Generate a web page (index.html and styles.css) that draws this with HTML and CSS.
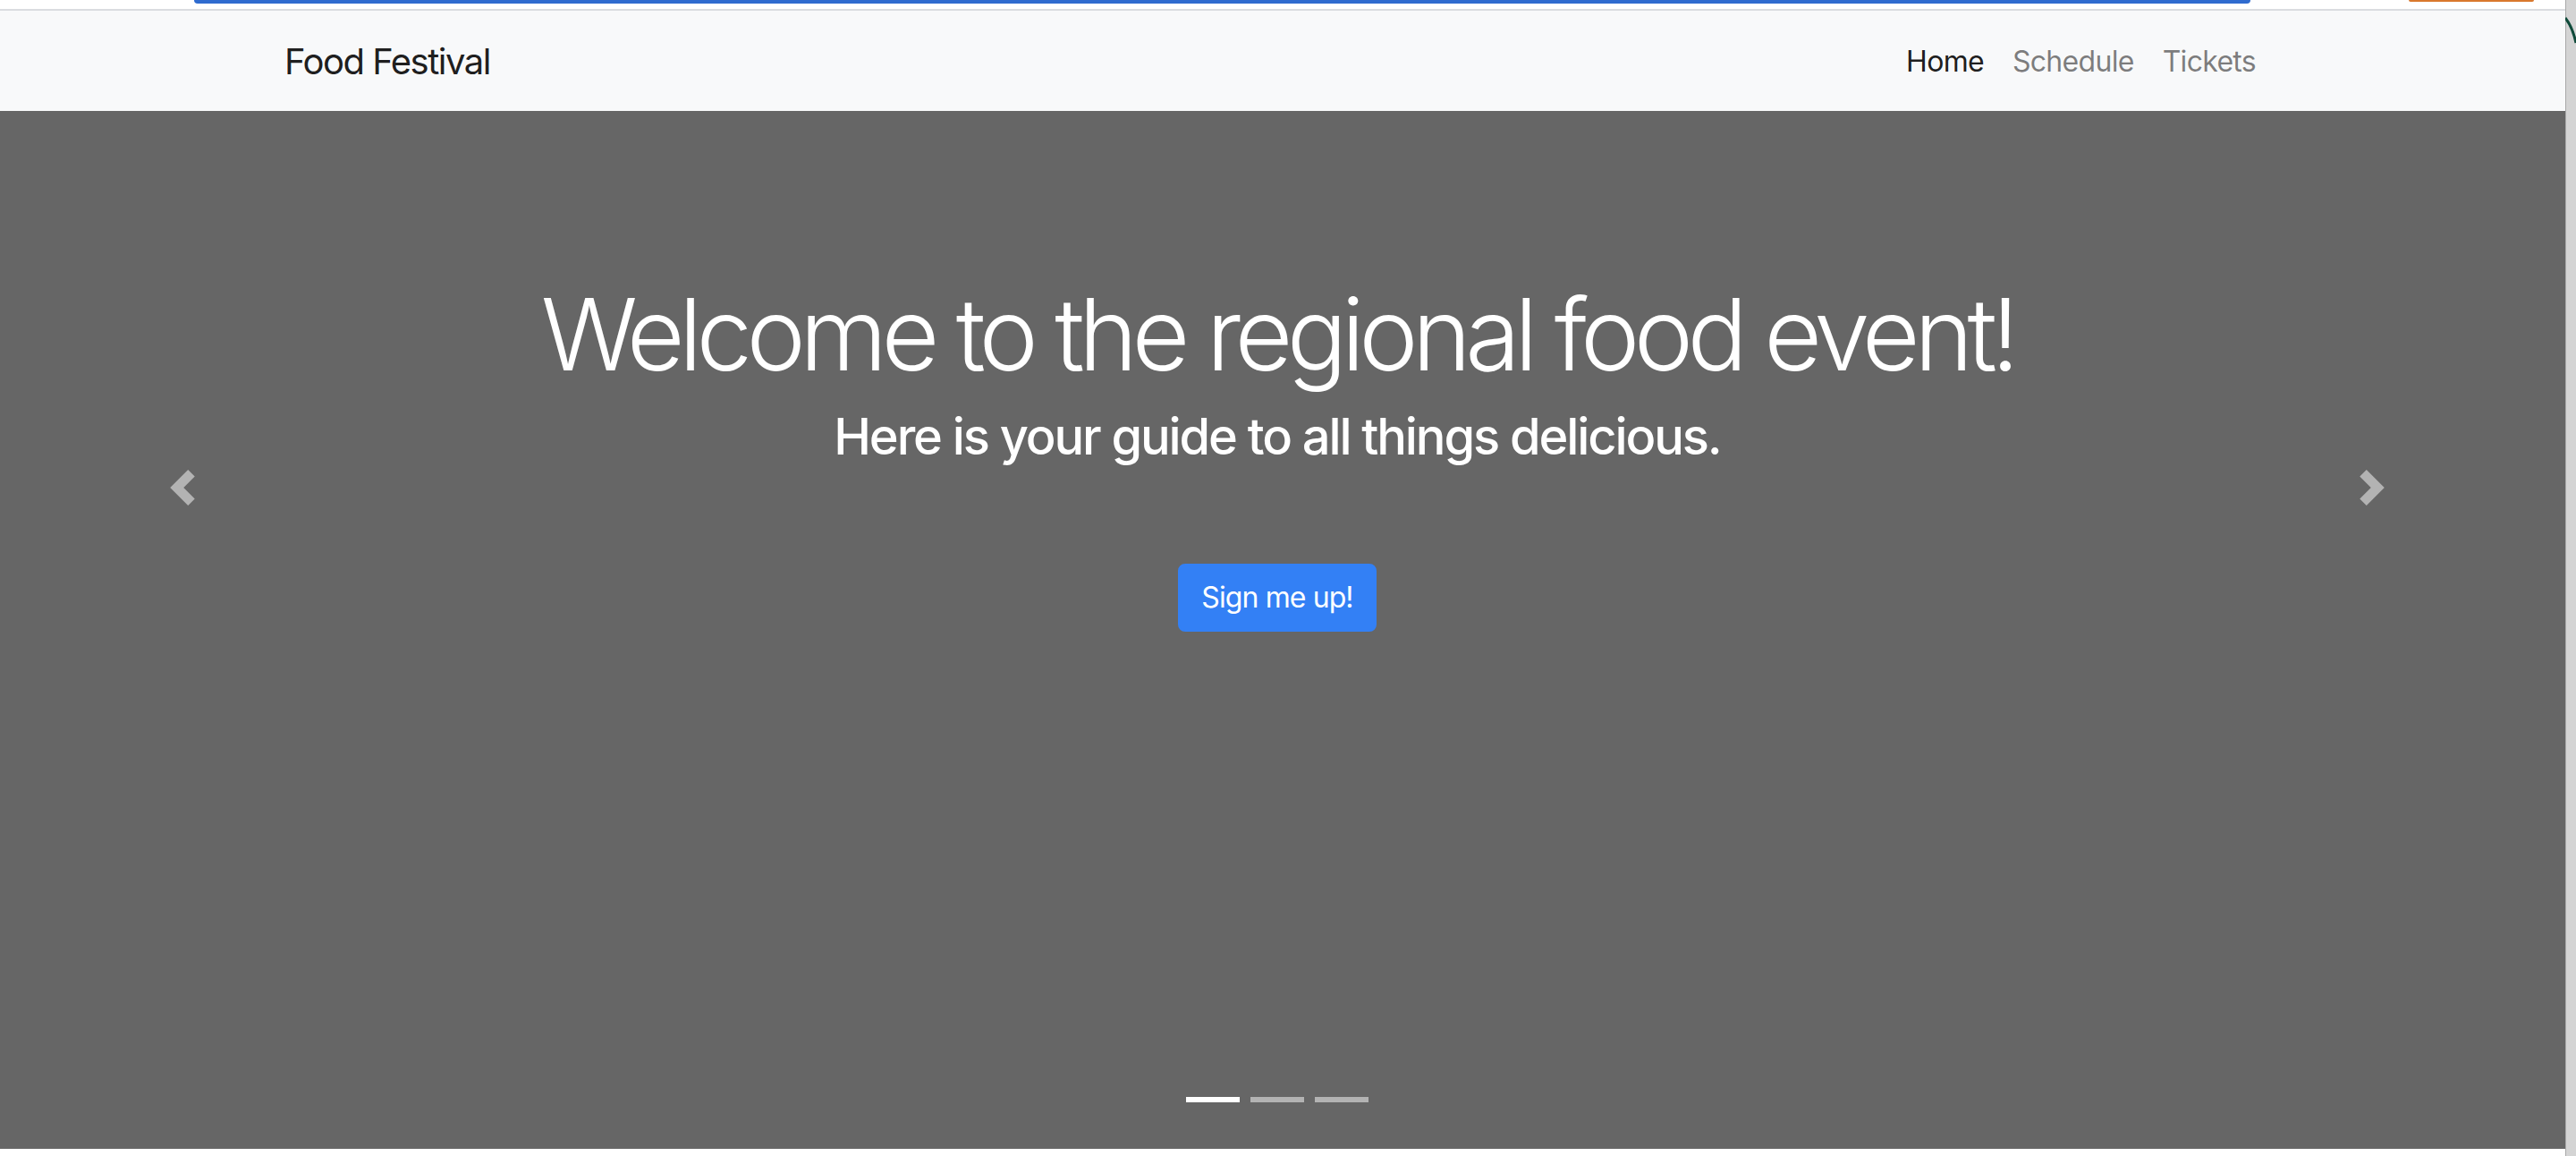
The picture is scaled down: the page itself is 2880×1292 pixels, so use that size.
FILE: index.html
```html
<!DOCTYPE html>
<html lang="en">
<head>
<meta charset="utf-8">
<title>Food Festival</title>
<link rel="stylesheet" href="styles.css">
</head>
<body>
<div class="window">
  <div class="chrome">
    <span class="chrome-blue"></span>
    <span class="chrome-orange"></span>
  </div>
  <nav class="navbar">
    <div class="container">
      <a class="brand" href="#">Food Festival</a>
      <ul class="nav">
        <li><a class="nav-link active" href="#">Home</a></li>
        <li><a class="nav-link" href="#">Schedule</a></li>
        <li><a class="nav-link" href="#">Tickets</a></li>
      </ul>
    </div>
  </nav>
  <section class="hero">
    <div class="hero-inner">
      <h1 class="hero-title">Welcome to the regional food event!</h1>
      <h3 class="hero-sub">Here is your guide to all things delicious.</h3>
      <a class="btn-primary" href="#">Sign me up!</a>
    </div>
    <a class="control control-prev" href="#" aria-label="Previous">
      <svg viewBox="0 0 8 8" width="40" height="40"><path d="M5.25 0l-4 4 4 4 1.5-1.5L4.25 4l2.5-2.5L5.25 0z" fill="#fff"/></svg>
    </a>
    <a class="control control-next" href="#" aria-label="Next">
      <svg viewBox="0 0 8 8" width="40" height="40"><path d="M2.75 0l-1.5 1.5L3.75 4l-2.5 2.5L2.75 8l4-4-4-4z" fill="#fff"/></svg>
    </a>
    <ol class="indicators">
      <li class="ind active"></li>
      <li class="ind"></li>
      <li class="ind"></li>
    </ol>
  </section>
  <div class="page-end"></div>
</div>
<div class="side">
  <svg class="side-curve" viewBox="0 0 12 40" width="12" height="40"><path d="M0 2 Q8 12 12 30" stroke="#0f4a3a" stroke-width="3" fill="none"/></svg>
</div>
</body>
</html>
```
FILE: styles.css
```css
* { box-sizing: border-box; }
html, body { margin: 0; padding: 0; }
body {
  width: 2880px;
  height: 1292px;
  overflow: hidden;
  display: flex;
  background: #ffffff;
  font-family: Inter, "Noto Sans", "Liberation Sans", sans-serif;
}
.window {
  width: 2868px;
  display: flex;
  flex-direction: column;
  background: #ffffff;
}
.chrome {
  height: 12px;
  display: flex;
  align-items: flex-start;
  padding-left: 217px;
  border-bottom: 2px solid #dadce0;
  background: #ffffff;
}
.chrome-blue {
  width: 2299px;
  height: 4px;
  background: #2f6bcf;
  border-radius: 0 0 5px 5px;
}
.chrome-orange {
  width: 140px;
  height: 2px;
  margin-left: 177px;
  background: #d9782d;
  border-radius: 0 0 3px 3px;
}
.navbar {
  height: 112px;
  background: #f8f9fa;
  padding-right: 12px;
  display: flex;
  align-items: center;
}
.container {
  width: 2280px;
  margin: 0 auto;
  padding: 0 30px;
  display: flex;
  align-items: center;
  justify-content: space-between;
}
.brand {
  font-size: 40px;
  line-height: 60px;
  padding-top: 2px;
  color: rgba(0, 0, 0, 0.9);
  text-decoration: none;
  letter-spacing: -1.5px;
}
.nav {
  list-style: none;
  margin: 0;
  padding: 0;
  display: flex;
}
.nav-link {
  display: block;
  padding: 2px 16px 0;
  font-size: 32px;
  line-height: 48px;
  color: rgba(0, 0, 0, 0.5);
  text-decoration: none;
  letter-spacing: -0.7px;
}
.nav-link.active { color: rgba(0, 0, 0, 0.9); }
.hero {
  position: relative;
  height: 1160px;
  background: #666666;
  padding-right: 12px;
}
.hero-inner {
  padding-top: 182px;
  display: flex;
  flex-direction: column;
  align-items: center;
  text-align: center;
  color: #ffffff;
}
.hero-title {
  margin: 0 0 15px;
  font-size: 112px;
  font-weight: 300;
  line-height: 1.2;
  letter-spacing: -6.6px;
}
.hero-sub {
  margin: 0 0 107px;
  font-size: 56px;
  font-weight: 500;
  line-height: 1.2;
  letter-spacing: -2.1px;
}
.btn-primary {
  display: inline-block;
  padding: 12px 24px;
  font-size: 32px;
  line-height: 48px;
  color: #ffffff;
  background: #3380f5;
  border: 2px solid #3380f5;
  border-radius: 8px;
  text-decoration: none;
  letter-spacing: -0.9px;
}
.control {
  position: absolute;
  top: 401px;
  width: 40px;
  height: 40px;
  opacity: 0.5;
  display: block;
}
.control svg { display: block; }
.control-prev { left: 184px; }
.control-next { left: 2632px; }
.indicators {
  position: absolute;
  left: 0;
  right: 12px;
  bottom: 52px;
  margin: 0;
  padding: 0;
  list-style: none;
  display: flex;
  justify-content: center;
  gap: 12px;
}
.ind {
  width: 60px;
  height: 6px;
  background: #ffffff;
  opacity: 0.5;
}
.ind.active { opacity: 1; }
.page-end {
  flex: 1;
  background: #ffffff;
}
.side {
  width: 12px;
  background: #d4d4d4;
  border-left: 1px solid #a9a9a9;
  position: relative;
}
.side-curve {
  position: absolute;
  top: 18px;
  left: -1px;
}
```
